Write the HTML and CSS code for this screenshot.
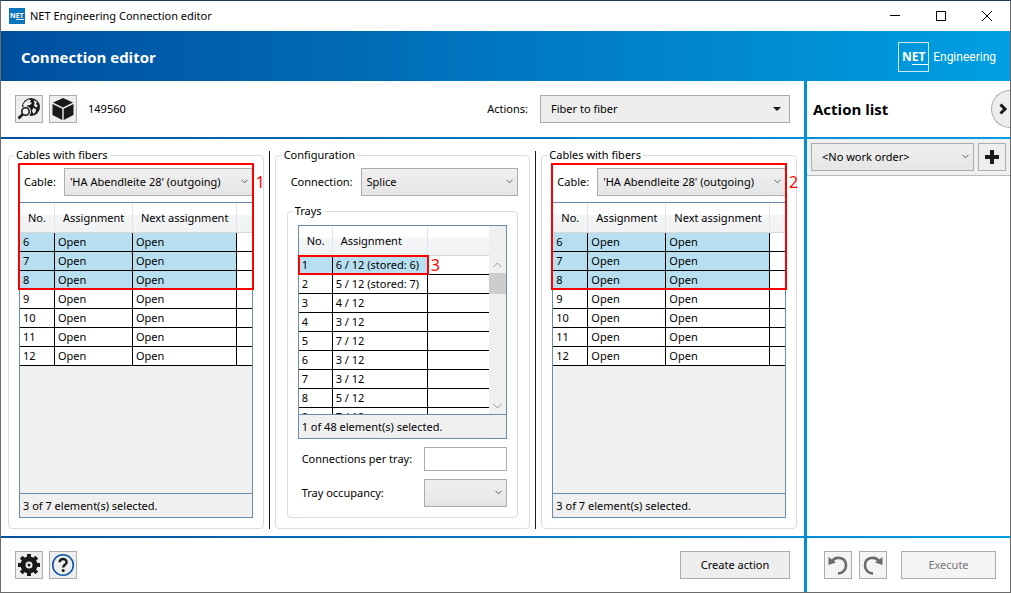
FILE: index.html
```
<!DOCTYPE html>
<html lang="en">
<head>
  <meta charset="UTF-8" />
  <title>NET Engineering Connection editor</title>
  <link rel="stylesheet" href="styles.css">
</head>
<body>
  <div class="window">
    <div class="titlebar">
      <svg class="app-icon" width="16" height="16" viewBox="0 0 16 16">
        <rect width="16" height="16" fill="#0a75bd"/>
        <text x="1" y="10" font-size="7" font-weight="bold" fill="#fff">NET</text>
        <path d="M7 11.5h8" stroke="#cfe6f5"/>
      </svg>
      <span class="window-title">NET Engineering Connection editor</span>
      <div class="window-buttons">
        <button aria-label="Minimize"><svg width="10" height="10" viewBox="0 0 10 10"><path d="M0 4.5h10"/></svg></button>
        <button aria-label="Maximize"><svg width="10" height="10" viewBox="0 0 10 10"><path d="M.5.5h9v9h-9z"/></svg></button>
        <button aria-label="Close"><svg width="10" height="10" viewBox="0 0 10 10"><path d="M0 0l10 10M10 0L0 10"/></svg></button>
      </div>
    </div>

    <header class="banner">
      <h1>Connection editor</h1>
      <div class="brand">
        <span class="brand-box">NET</span>
        <span class="brand-name">Engineering</span>
      </div>
    </header>

    <main class="panes">
      <div class="toolbar">
        <button class="icon-button" aria-label="Show on map">
          <svg width="24" height="24" viewBox="0 0 24 24">
            <circle cx="14" cy="10" r="9" fill="#1a1a1a"/>
            <path d="M8 5l3-2.500 3 .5-1 2 2 1-2 2-3 .5-1 2-2-1-1-2zM17 3l3 2-1 2 2 2-2 1.500-2-2 .500-2zM16 11l3 1-.500 3-2 2-1.500-3z" fill="#eee"/>
            <circle cx="8.500" cy="14.500" r="5.500" fill="#eee"/>
            <circle cx="8.500" cy="14.500" r="3.700" fill="#eee" stroke="#1a1a1a" stroke-width="1.600"/>
            <path d="M5.800 17.200L1.500 21.500" stroke="#1a1a1a" stroke-width="2.600"/>
          </svg>
        </button>
        <button class="icon-button" aria-label="Show object">
          <svg width="24" height="24" viewBox="0 0 24 24" fill="#1a1a1a">
            <path d="M12 1l10 4.600-10 4.800L2 5.600zM1.500 7l9.800 4.800V23L1.500 18zM22.500 7l-9.800 4.800V23l9.800-5z"/>
          </svg>
        </button>
        <span class="object-id">149560</span>
        <label class="actions-label" for="actions">Actions:</label>
        <div class="select actions-select">
          <select id="actions"><option>Fiber to fiber</option></select>
          <svg class="arrow" width="8" height="4" viewBox="0 0 8 4"><path d="M0 0h8L4 4z" fill="#1a1a1a"/></svg>
        </div>
      </div>

      <div class="list-title">
        <h2>Action list</h2>
        <button class="collapse" aria-label="Collapse">
          <svg width="9" height="12" viewBox="0 0 9 12"><path d="M1.500 1.500L6 6l-4.500 4.500" fill="none" stroke="#1a1a1a" stroke-width="3"/></svg>
        </button>
      </div>

      <div class="editor">
        <fieldset class="group cables">
          <legend>Cables with fibers</legend>
          <div class="field-row">
            <label for="cable-a">Cable:</label>
            <div class="select">
              <select id="cable-a"><option>'HA Abendleite 28' (outgoing)</option></select>
              <svg class="chevron" width="7" height="5" viewBox="0 0 7 5"><path d="M.5.8l3 3 3-3"/></svg>
            </div>
          </div>
          <div class="data-grid">
            <div class="grid-body">
              <table>
                <colgroup><col class="col-no"><col class="col-assign"><col class="col-next"><col></colgroup>
                <thead><tr><th>No.</th><th>Assignment</th><th>Next assignment</th><th></th></tr></thead>
                <tbody>
                  <tr class="selected"><td>6</td><td>Open</td><td>Open</td><td></td></tr>
                  <tr class="selected"><td>7</td><td>Open</td><td>Open</td><td></td></tr>
                  <tr class="selected"><td>8</td><td>Open</td><td>Open</td><td></td></tr>
                  <tr><td>9</td><td>Open</td><td>Open</td><td></td></tr>
                  <tr><td>10</td><td>Open</td><td>Open</td><td></td></tr>
                  <tr><td>11</td><td>Open</td><td>Open</td><td></td></tr>
                  <tr><td>12</td><td>Open</td><td>Open</td><td></td></tr>
                </tbody>
              </table>
            </div>
            <div class="grid-status">3 of 7 element(s) selected.</div>
          </div>
          <div class="callout"><span>1</span></div>
        </fieldset>

        <div class="divider"></div>

        <fieldset class="group config">
          <legend>Configuration</legend>
          <div class="field-row">
            <label for="connection">Connection:</label>
            <div class="select">
              <select id="connection"><option>Splice</option></select>
              <svg class="chevron" width="7" height="5" viewBox="0 0 7 5"><path d="M.5.8l3 3 3-3"/></svg>
            </div>
          </div>
          <fieldset class="group trays">
            <legend>Trays</legend>
            <div class="data-grid">
              <div class="grid-body">
                <table>
                  <colgroup><col class="col-no"><col class="col-tray"><col></colgroup>
                  <thead><tr><th>No.</th><th>Assignment</th><th></th></tr></thead>
                  <tbody>
                    <tr class="selected"><td>1</td><td>6 / 12 (stored: 6)</td><td></td></tr>
                    <tr><td>2</td><td>5 / 12 (stored: 7)</td><td></td></tr>
                    <tr><td>3</td><td>4 / 12</td><td></td></tr>
                    <tr><td>4</td><td>3 / 12</td><td></td></tr>
                    <tr><td>5</td><td>7 / 12</td><td></td></tr>
                    <tr><td>6</td><td>3 / 12</td><td></td></tr>
                    <tr><td>7</td><td>3 / 12</td><td></td></tr>
                    <tr><td>8</td><td>5 / 12</td><td></td></tr>
                    <tr><td>9</td><td>7 / 12</td><td></td></tr>
                  </tbody>
                </table>
                <div class="scrollbar">
                  <svg width="9" height="6" viewBox="0 0 9 6"><path d="M.5 5l4-4 4 4"/></svg>
                  <div class="thumb"></div>
                  <svg class="down" width="9" height="6" viewBox="0 0 9 6"><path d="M.5 1l4 4 4-4"/></svg>
                </div>
              </div>
              <div class="grid-status">1 of 48 element(s) selected.</div>
              <div class="callout"><span>3</span></div>
            </div>
            <div class="tray-field">
              <label for="per-tray">Connections per tray:</label>
              <input type="text" id="per-tray" />
            </div>
            <div class="tray-field">
              <label for="occupancy">Tray occupancy:</label>
              <div class="select">
                <select id="occupancy"><option></option></select>
                <svg class="chevron" width="7" height="5" viewBox="0 0 7 5"><path d="M.5.8l3 3 3-3"/></svg>
              </div>
            </div>
          </fieldset>
        </fieldset>

        <div class="divider"></div>

        <fieldset class="group cables">
          <legend>Cables with fibers</legend>
          <div class="field-row">
            <label for="cable-b">Cable:</label>
            <div class="select">
              <select id="cable-b"><option>'HA Abendleite 28' (outgoing)</option></select>
              <svg class="chevron" width="7" height="5" viewBox="0 0 7 5"><path d="M.5.8l3 3 3-3"/></svg>
            </div>
          </div>
          <div class="data-grid">
            <div class="grid-body">
              <table>
                <colgroup><col class="col-no"><col class="col-assign"><col class="col-next"><col></colgroup>
                <thead><tr><th>No.</th><th>Assignment</th><th>Next assignment</th><th></th></tr></thead>
                <tbody>
                  <tr class="selected"><td>6</td><td>Open</td><td>Open</td><td></td></tr>
                  <tr class="selected"><td>7</td><td>Open</td><td>Open</td><td></td></tr>
                  <tr class="selected"><td>8</td><td>Open</td><td>Open</td><td></td></tr>
                  <tr><td>9</td><td>Open</td><td>Open</td><td></td></tr>
                  <tr><td>10</td><td>Open</td><td>Open</td><td></td></tr>
                  <tr><td>11</td><td>Open</td><td>Open</td><td></td></tr>
                  <tr><td>12</td><td>Open</td><td>Open</td><td></td></tr>
                </tbody>
              </table>
            </div>
            <div class="grid-status">3 of 7 element(s) selected.</div>
          </div>
          <div class="callout"><span>2</span></div>
        </fieldset>
      </div>

      <div class="action-list">
        <div class="order-bar">
          <div class="select">
            <select aria-label="Work order"><option>&lt;No work order&gt;</option></select>
            <svg class="chevron" width="7" height="5" viewBox="0 0 7 5"><path d="M.5.8l3 3 3-3"/></svg>
          </div>
          <button class="icon-button" aria-label="Add work order">
            <svg width="14" height="14" viewBox="0 0 14 14"><path d="M7 0v14M0 7h14" stroke="#1a1a1a" stroke-width="4"/></svg>
          </button>
        </div>
      </div>

      <div class="footer">
        <button class="icon-button" aria-label="Settings">
          <svg width="24" height="24" viewBox="0 0 24 24">
            <circle cx="12" cy="12" r="6" fill="none" stroke="#1a1a1a" stroke-width="5"/>
            <g stroke="#1a1a1a" stroke-width="4">
              <path d="M12 1v4M12 19v4M1 12h4M19 12h4M4.200 4.200l3 3M16.800 16.800l3 3M4.200 19.800l3-3M16.800 7.200l3-3"/>
            </g>
            <circle cx="12" cy="12" r="1.500" fill="#1a1a1a"/>
          </svg>
        </button>
        <button class="icon-button" aria-label="Help">
          <svg width="24" height="24" viewBox="0 0 24 24" fill="none">
            <circle cx="12" cy="12" r="10.300" stroke="#0f57a5" stroke-width="1.600"/>
            <path d="M8.600 9.200c0-4.400 7.200-4.200 7 0-.1 2.600-3.400 2.600-3.400 5.300" stroke="#1a1a1a" stroke-width="2.400"/>
            <circle cx="12.200" cy="17.500" r="1.500" fill="#1a1a1a"/>
          </svg>
        </button>
        <button class="text-button create">Create action</button>
      </div>

      <div class="list-footer">
        <button class="icon-button" aria-label="Undo" disabled>
          <svg width="24" height="24" viewBox="0 0 24 24">
            <path d="M6 8.500C9 3 20 3.500 20 12.500c0 4.500-3.500 7.800-8 8" fill="none" stroke="#6b6b6b" stroke-width="2.600"/>
            <path d="M2.500 4v8l7.500-2.500z" fill="#6b6b6b"/>
          </svg>
        </button>
        <button class="icon-button" aria-label="Redo" disabled>
          <svg width="24" height="24" viewBox="0 0 24 24">
            <path d="M18 8.500C15 3 4 3.500 4 12.500c0 4.500 3.500 7.800 8 8" fill="none" stroke="#6b6b6b" stroke-width="2.600"/>
            <path d="M21.500 4v8L14 9.500z" fill="#6b6b6b"/>
          </svg>
        </button>
        <button class="text-button execute" disabled>Execute</button>
      </div>
    </main>
  </div>
</body>
</html>
```
FILE: styles.css
```
* {
  box-sizing: border-box;
}
body {
  margin: 0;
  font-family: "Noto Sans", "Open Sans", sans-serif;
  font-size: 11px;
  line-height: 16px;
  color: #000;
}
button, select, input {
  font: inherit;
  color: inherit;
  margin: 0;
  padding: 0;
}
svg {
  display: block;
}
h1, h2 {
  margin: 0;
  font-family: "Open Sans", sans-serif;
  font-size: 15px;
  line-height: 20px;
}
h1 {
  color: #fff;
}

.window {
  display: flex;
  flex-direction: column;
  min-height: 100vh;
  border: 1px solid #6b6b6b;
  border-top-color: #23395a;
  background: #fff;
}
.titlebar {
  display: flex;
  align-items: center;
  height: 30px;
  padding-left: 8px;
}
.window-title {
  margin-left: 5px;
}
.window-buttons {
  display: flex;
  margin-left: auto;
}
.window-buttons button {
  display: flex;
  align-items: center;
  justify-content: center;
  width: 46px;
  height: 28px;
  border: none;
  background: none;
}
.window-buttons path {
  fill: none;
  stroke: #000;
}

.banner {
  display: flex;
  align-items: center;
  justify-content: space-between;
  height: 50px;
  padding: 2px 14px 0 20px;
  background: linear-gradient(90deg, #004f9f, #009fe3);
}
.brand {
  display: flex;
  align-items: center;
  gap: 4px;
  color: #fff;
}
.brand-box {
  position: relative;
  width: 31px;
  height: 30px;
  border: 1px solid #cfe9f8;
  font-family: "Open Sans", sans-serif;
  font-size: 12px;
  font-weight: bold;
  line-height: 28px;
  text-align: center;
}
.brand-box::after {
  content: "";
  position: absolute;
  right: 0;
  bottom: 6px;
  width: 16px;
  height: 1px;
  background: #fff;
}
.brand-name {
  font-family: Roboto, sans-serif;
  font-size: 12px;
}

/* the blue lines are the gradient showing through the gaps */
.panes {
  flex: 1;
  display: grid;
  grid-template-columns: 1fr 203px;
  grid-template-rows: 56px 1fr 54px;
  gap: 2px 3px;
  background: linear-gradient(90deg, #004f9f, #009fe3);
}
.panes > div {
  background: #fff;
}

.icon-button, .text-button {
  display: flex;
  align-items: center;
  justify-content: center;
  height: 28px;
  border: 1px solid #adadad;
  background: #eee;
}
.icon-button {
  width: 28px;
}
.icon-button:disabled, .text-button:disabled {
  background: #f4f4f4;
  color: #767676;
}

.select {
  position: relative;
  flex: 1;
}
.select select {
  display: block;
  width: 100%;
  height: 28px;
  padding: 0 16px 0 5px;
  border: 1px solid #acacac;
  border-radius: 0;
  appearance: none;
  background: linear-gradient(#f0f0f0, #e5e5e5);
}
.select svg {
  position: absolute;
  right: 5px;
  top: 11px;
  pointer-events: none;
}
.chevron path {
  fill: none;
  stroke: #606060;
}

.toolbar {
  display: flex;
  align-items: center;
  gap: 6px;
  padding: 0 14px;
}
.object-id {
  margin-left: 5px;
}
.actions-label {
  margin-left: auto;
}
.actions-select {
  flex: none;
  width: 250px;
  margin-left: 6px;
}
.actions-select select {
  padding-left: 10px;
  background: #eee;
}
.actions-select .arrow {
  right: 9px;
  top: 12px;
}

.list-title {
  display: flex;
  align-items: center;
  justify-content: space-between;
  padding-left: 6px;
  overflow: hidden;
}
.collapse {
  display: flex;
  align-items: center;
  width: 19px;
  height: 38px;
  padding-left: 7px;
  border: 1px solid #adadad;
  border-right: none;
  border-radius: 19px 0 0 19px;
  background: #eee;
}

.editor {
  display: grid;
  grid-template-columns: 1fr 1px 1fr 1px 1fr;
  gap: 5px;
  padding: 9px 7px 7px;
}
.divider {
  margin-top: 3px;
  background: #1a1a1a;
}
.group {
  position: relative;
  display: flex;
  flex-direction: column;
  min-width: 0;
  margin: 0;
  padding: 6px 10px 10px;
  border: 1px solid #d5dfe5;
  border-radius: 4px;
}
.group legend {
  margin-left: -5px;
  padding: 0 2px;
  height: 14px;
  line-height: 14px;
}
.field-row {
  display: flex;
  align-items: center;
}
.cables .field-row {
  gap: 8px;
  padding-left: 5px;
}
.data-grid {
  position: relative;
  flex: 1;
  display: flex;
  flex-direction: column;
  margin-top: 6px;
  border: 1px solid #688caf;
  background: #f0f0f0;
}
.grid-body {
  display: flex;
  align-items: flex-start;
  flex: 1 1 0;
  min-height: 0;
  overflow: hidden;
}
.grid-status {
  height: 24px;
  padding-left: 3px;
  border-top: 1px solid #688caf;
  line-height: 24px;
}

table {
  flex: 1;
  width: 100%;
  table-layout: fixed;
  border-collapse: separate;
  border-spacing: 0;
  background: #fff;
}
.col-no {
  width: 35px;
}
.col-assign {
  width: 78px;
}
.col-next {
  width: 104px;
}
.col-tray {
  width: 95px;
}
th {
  height: 30px;
  padding: 0 0 0 8px;
  border-right: 1px solid #e3e5e8;
  border-bottom: 1px solid #d8d8d8;
  background: linear-gradient(#fff 40%, #f4f5f7 41%, #f1f2f4);
  font-weight: normal;
  text-align: left;
  white-space: nowrap;
}
td {
  height: 19px;
  padding: 0 0 0 3px;
  border-right: 1px solid #000;
  border-bottom: 1px solid #000;
  line-height: 18px;
  white-space: nowrap;
}
th:last-child, td:last-child {
  border-right: none;
}
.selected td:not(:last-child) {
  background: #b7dff0;
}

.callout {
  position: absolute;
  top: 1px;
  left: 9px;
  right: 9px;
  height: 127px;
  border: 2px solid #f00;
  pointer-events: none;
}
.callout span {
  position: absolute;
  left: 100%;
  top: 9px;
  margin-left: 4px;
  color: #f00;
  font-size: 16px;
  line-height: 16px;
}

.config {
  padding-left: 11px;
  padding-right: 11px;
}
.config > .field-row {
  gap: 8px;
  padding-left: 4px;
}
.trays {
  flex: 1;
  margin-top: 8px;
}
.trays .data-grid {
  margin-top: 1px;
}
.trays .col-no {
  width: 34px;
}
.trays .callout {
  top: 29px;
  left: -1px;
  right: auto;
  width: 131px;
  height: 20px;
}
.trays .callout span {
  top: 0;
}
.scrollbar {
  align-self: stretch;
  display: flex;
  flex-direction: column;
  align-items: center;
  width: 17px;
  padding: 36px 0 5px;
}
.scrollbar path {
  fill: none;
  stroke: #9a9a9a;
}
.scrollbar .thumb {
  width: 17px;
  height: 21px;
  margin-top: 5px;
  background: #cdcdcd;
}
.scrollbar .down {
  margin-top: auto;
}
.tray-field {
  display: flex;
  align-items: center;
  justify-content: space-between;
  margin-top: 8px;
  padding-left: 4px;
}
.tray-field input {
  width: 83px;
  height: 24px;
  border: 1px solid #abadb3;
}
.tray-field .select {
  flex: none;
  width: 83px;
}

.order-bar {
  display: flex;
  gap: 4px;
  padding: 4px;
  border-bottom: 1px solid #b8b8b8;
  background: #f0f0f0;
}
.order-bar select {
  padding-left: 10px;
}

.footer, .list-footer {
  display: flex;
  align-items: center;
  gap: 6px;
  padding: 0 14px;
}
.create {
  width: 110px;
  margin-left: auto;
}
.list-footer {
  gap: 7px;
  padding-left: 17px;
}
.execute {
  width: 95px;
  margin-left: auto;
}
```
